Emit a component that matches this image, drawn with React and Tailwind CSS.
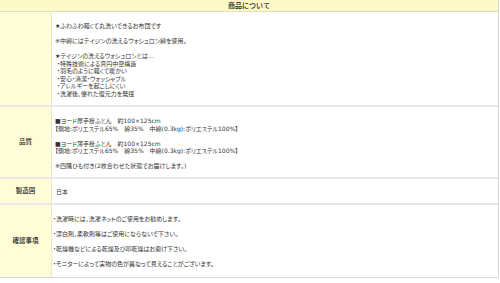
export default function App() {
  const font = { fontFamily: '"Noto Sans CJK JP", "Noto Sans", sans-serif' };
  const body =
    "flex-1 text-[6px] leading-[7.5px] text-[#333] [font-feature-settings:'palt'] [font-family:'DejaVu_Sans','Noto_Sans_CJK_JP',sans-serif]";
  const label =
    "w-[52px] shrink-0 bg-[#fffcd8] border-r border-[#ece8c8] flex items-center justify-center text-[6.5px] font-medium text-[#222]";
  return (
    <div className="w-[500px] h-[283px] bg-white" style={font}>
      <div className="w-[499px] border-r border-b border-[#d8d8d8]">
        <div className="h-[12px] bg-[#fdf9c6] border-b border-[#e2dfb8] flex items-center justify-center text-[7px] font-medium text-[#222]">
          商品について
        </div>
        <div className="flex border-b-2 border-[#e8e8e8] h-[95px]">
          <div className={label}></div>
          <div className={body + " pl-[3px] pt-[10px]"}>
            <div>★ふわふわ軽くて丸洗いできるお布団です</div>
            <div>&nbsp;</div>
            <div>※中綿にはテイジンの洗えるウォシュロン綿を使用。</div>
            <div>&nbsp;</div>
            <div>★テイジンの洗えるウォシュロンとは…</div>
            <div className="pl-[2px]">・特殊技術による真円中空構造</div>
            <div className="pl-[2px]">・羽毛のように軽くて暖かい</div>
            <div className="pl-[2px]">・安心・清潔・ウォッシャブル</div>
            <div className="pl-[2px]">・アレルギーを起こしにくい</div>
            <div className="pl-[2px]">・洗濯後、優れた復元力を発揮</div>
          </div>
        </div>
        <div className="flex border-b-2 border-[#e8e8e8] h-[72px]">
          <div className={label}>品質</div>
          <div className={body + " pl-[3px] pt-[10px]"}>
            <div>■ヨード厚手掛ふとん　約100×125cm</div>
            <div>【側地:ポリエステル65%　綿35%　中綿(0.3kg):ポリエステル100%】</div>
            <div>&nbsp;</div>
            <div>■ヨード薄手掛ふとん　約100×125cm</div>
            <div>【側地:ポリエステル65%　綿35%　中綿(0.3kg):ポリエステル100%】</div>
            <div>&nbsp;</div>
            <div>※四隅ひも付き(2枚合わせた状態でお届けします。)</div>
          </div>
        </div>
        <div className="flex border-b-2 border-[#e8e8e8] h-[26px]">
          <div className={label}>製造国</div>
          <div className={body + " pl-[4px] pt-[9px]"}>
            <div>日本</div>
          </div>
        </div>
        <div className="flex h-[72px]">
          <div className={label}>確認事項</div>
          <div className={body + " pl-[1px] pt-[10px]"}>
            <div>・洗濯時には、洗濯ネットのご使用をお勧めします。</div>
            <div>&nbsp;</div>
            <div>・漂白剤、柔軟剤等はご使用にならないで下さい。</div>
            <div>&nbsp;</div>
            <div>・乾燥機などによる乾燥及び叩乾燥はお避け下さい。</div>
            <div>&nbsp;</div>
            <div>・モニターによって実物の色が異なって見えることがございます。</div>
          </div>
        </div>
      </div>
    </div>
  );
}
